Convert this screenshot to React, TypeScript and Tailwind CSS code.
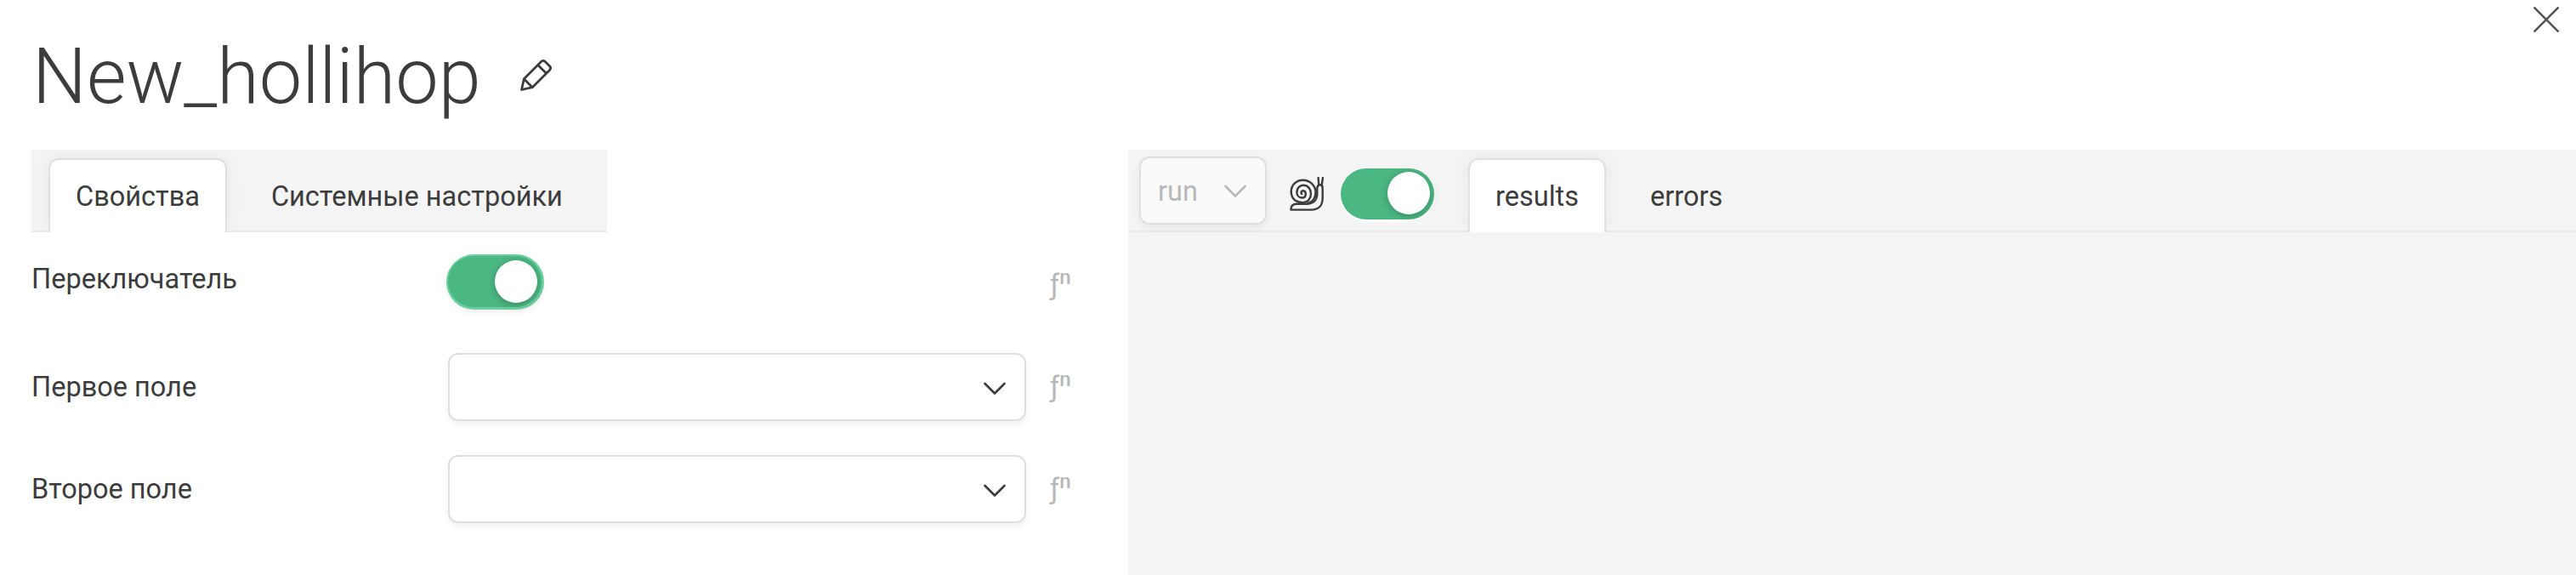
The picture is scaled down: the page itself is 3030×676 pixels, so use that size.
import React from "react";

function Toggle({ className = "" }: { className?: string }) {
  return (
    <button
      className={`flex h-[60px] w-[110px] shrink-0 items-start justify-end rounded-full bg-[#4bb782] pr-[5px] ${className}`}
    >
      <span className="size-[50px] rounded-full bg-white shadow-[0_2px_8px_rgba(0,0,0,0.25)]" />
    </button>
  );
}

function Chevron({ className = "" }: { className?: string }) {
  return (
    <svg viewBox="0 0 28 16" className={`h-4 w-7 ${className}`} fill="none" stroke="currentColor" strokeWidth="2.6" strokeLinecap="round" strokeLinejoin="round">
      <path d="M2.5 2 L14 13.5 L25.5 2" />
    </svg>
  );
}

function Tab({ children, active = false }: { children: React.ReactNode; active?: boolean }) {
  return (
    <button
      className={
        active
          ? "flex h-[87px] items-center rounded-t-[12px] border-2 border-b-0 border-[#dfdfdf] bg-white px-[30px] pt-[2px] shadow-[0_0_20px_rgba(0,0,0,0.06)]"
          : "flex h-[87px] items-center px-8 pt-1"
      }
    >
      {children}
    </button>
  );
}

function Fn() {
  return (
    <span className="flex w-[30px] items-start leading-[40px] text-[#b8b8b8]">
      <span className="text-[33px]">ƒ</span>
      <span className="-mt-[9px] text-[24px] font-medium">n</span>
    </span>
  );
}

function SelectRow({ label }: { label: string }) {
  return (
    <div className="flex h-[120px] items-start">
      <div className="w-[490px] pt-5 leading-[40px]">{label}</div>
      <div className="flex h-20 w-[680px] items-center justify-end rounded-[12px] border-2 border-[#dfdfdf] bg-white pt-1 pr-[21px] shadow-[0_4px_8px_rgba(0,0,0,0.06)]">
        <Chevron />
      </div>
      <div className="ml-7 pt-[20px]">
        <Fn />
      </div>
    </div>
  );
}

export default function App() {
  return (
    <div className="relative flex h-[676px] w-[3030px] flex-col overflow-hidden bg-white font-['Roboto',sans-serif] text-[32.5px] text-[#3c3c3c]">
      <header className="flex h-44 items-start pl-[38px] pt-[38px]">
        <h1 className="text-[90px] leading-[106px] font-light">New_hollihop</h1>
        <svg viewBox="0 0 40 40" className="mt-[31px] ml-[44px] size-10" fill="none" stroke="currentColor" strokeWidth="2.8" strokeLinejoin="round" strokeLinecap="round">
          <path d="M3.5 36.5 L6.3 23.8 L26.8 3.3 Q29 1.4 31.2 3.4 L36.6 8.8 Q38.6 11 36.7 13.2 L16.2 33.7 Z M6.3 23.8 L16.2 33.7 M22.8 7.5 L32.6 17.3" />
        </svg>
        <svg viewBox="0 0 30 30" className="mt-[-30px] mr-5 ml-auto size-[30px]" fill="none" stroke="#555" strokeWidth="2.6">
          <path d="M0.5 0.5 L29.5 29.5 M29.5 0.5 L0.5 29.5" />
        </svg>
      </header>
      <div className="flex flex-1">
        <section className="w-[1290px] pl-[37px]">
          <div className="flex h-[97px] w-[677px] items-end overflow-hidden bg-[#f4f4f4] pl-5 shadow-[inset_0_-2px_0_#e9e9e9]">
            <Tab active>Свойства</Tab>
            <div className="ml-5">
              <Tab>Системные настройки</Tab>
            </div>
          </div>
          <div className="flex h-[142px] items-start">
            <div className="w-[490px] pt-[35px] leading-[40px]">Переключатель</div>
            <div className="w-[680px] pt-[28px]">
              <Toggle className="pt-[5px] shadow-[0.5px_0.5px_0_2.5px_#6bd09f,0_4px_10px_rgba(0,0,0,0.1)]" />
            </div>
            <div className="ml-7 pt-[42px]">
              <Fn />
            </div>
          </div>
          <SelectRow label="Первое поле" />
          <SelectRow label="Второе поле" />
        </section>
        <section className="ml-[37px] flex-1 bg-[#f4f4f4]">
          <div className="flex h-[97px] items-end overflow-hidden pl-[13px] shadow-[inset_0_-2px_0_#e9e9e9]">
            <button className="mb-[9px] flex h-20 w-[150px] items-center justify-between rounded-[12px] border-2 border-[#dfdfdf] bg-[#fafafa] pr-[21px] pl-5 text-[#b8b8b8] shadow-[0_4px_8px_rgba(0,0,0,0.06)]">
              <span className="pt-[2px]">run</span>
              <Chevron className="mt-0.5" />
            </button>
            <svg viewBox="0 0 40 40" className="mb-[25px] ml-[27px] size-10" fill="none" stroke="currentColor" strokeWidth="2.4" strokeLinecap="round" strokeLinejoin="round">
              <path d="M14.2 20 C12.600 18.200 14 16.200 15.800 16.300 C17.800 16.500 18.900 18.300 18.800 20.300 C18.600 23 16.800 24.600 14.400 24.500 C10.800 24.300 8.400 21.600 8.400 18.200 C8.400 13.300 11.600 9.800 16 9.800 C21.200 9.800 25 14 25 19.600 C25 25.600 21.400 30 15.600 30.300 C7.600 30.500 1.700 25 1.700 17.400 C1.700 9.600 7.600 3.800 15.600 3.800 C23.400 3.800 30.500 10 30.500 18 C30.500 25 27 29.500 21 31.400" />
              <path d="M1.400 38.600 C1.400 34.500 3.500 32 7.500 31.700 H19.500 C27.500 31.700 32.300 27.500 32.300 20 V14 Q32.300 9.200 35.600 9.200 Q38.700 9.200 38.700 13 V25 C38.700 33.500 34 38.600 25.500 38.600 Z" />
              <path d="M33.600 1 L34.200 8.800 M39 1 L37.800 8.800" />
            </svg>
            <Toggle className="mb-[15px] ml-5 pt-1 shadow-[0_3px_3px_#fff]" />
            <div className="ml-10 flex">
              <Tab active>results</Tab>
              <div className="ml-5">
                <Tab>errors</Tab>
              </div>
            </div>
          </div>
        </section>
      </div>
    </div>
  );
}
